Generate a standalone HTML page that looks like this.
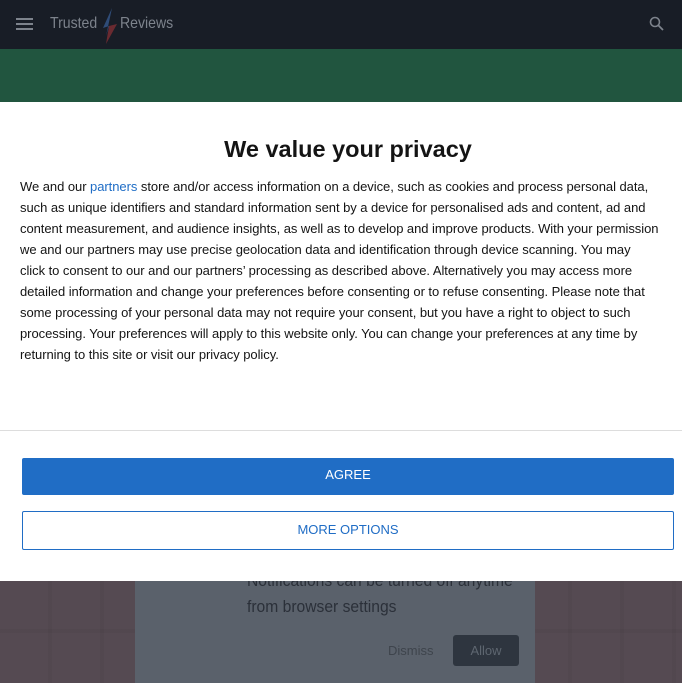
<!DOCTYPE html>
<html><head><style>
*{margin:0;padding:0;box-sizing:border-box}
body{width:682px;height:683px;overflow:hidden;position:relative;font-family:"Liberation Sans",sans-serif;background:#54494f}
.hdr{position:absolute;left:0;top:0;width:682px;height:49px;background:#181d26}
.green{position:absolute;left:0;top:49px;width:682px;height:53px;background:#21553f}
.bot{position:absolute;left:0;top:581px;width:682px;height:102px;background:
repeating-linear-gradient(90deg,transparent 0 48px,rgba(0,0,0,.035) 48px 52px),
repeating-linear-gradient(0deg,transparent 0 50px,rgba(0,0,0,.035) 50px 54px),#554a52}
.panel{position:absolute;left:135px;top:560px;width:400px;height:123px;background:#5a616b}
.modal{position:absolute;left:0;top:102px;width:682px;height:479px;background:#fff}
h1{position:absolute;top:34px;left:7px;width:100%;text-align:center;font-size:23.5px;font-weight:bold;color:#141414}
.txt{position:absolute;left:20px;top:74px;width:660px;font-size:13px;line-height:21px;color:#141414;letter-spacing:-0.05px;white-space:nowrap}
.txt a{color:#1f6dc6;text-decoration:none}
.sep{position:absolute;left:0;top:328px;width:682px;height:1px;background:#ddd}
.b1{position:absolute;left:22px;top:356px;width:652px;height:37px;background:#206dc5;border-radius:2px;color:#fff;font-size:13px;text-align:center;line-height:34px}
.b2{position:absolute;left:22px;top:409px;width:652px;height:39px;border:1px solid #206dc5;border-radius:2px;color:#206dc5;font-size:13px;text-align:center;line-height:36px}
.n{display:inline-block;transform:scaleX(.88);transform-origin:left}
</style></head><body>
<div class="hdr">
<svg style="position:absolute;left:16px;top:17px" width="17" height="14"><g stroke="#7d838c" stroke-width="2"><line x1="0" y1="2" x2="17" y2="2"/><line x1="0" y1="7" x2="17" y2="7"/><line x1="0" y1="12" x2="17" y2="12"/></g></svg>
<span class="n" style="position:absolute;left:50px;top:15px;font-size:16px;color:#7d838c">Trusted</span>
<svg style="position:absolute;left:101px;top:8px" width="18" height="36"><polygon points="11,0 2,20 8,18 5,28" fill="#2f4c78"/><polygon points="8,18 16,16 5,36" fill="#6a2a30"/></svg>
<span class="n" style="position:absolute;left:120px;top:15px;font-size:16px;color:#7d838c">Reviews</span>
<svg style="position:absolute;left:649px;top:16px" width="15" height="15"><circle cx="6" cy="6" r="4.5" stroke="#7d838c" stroke-width="1.6" fill="none"/><line x1="9.5" y1="9.5" x2="14" y2="14" stroke="#7d838c" stroke-width="1.8"/></svg>
</div>
<div style="position:absolute;left:545px;top:49px;width:137px;height:1px;background:#181d26"></div>
<div class="green"></div>
<div class="bot"></div>
<div class="panel">
<div style="position:absolute;left:112px;top:8px;font-size:17px;color:#2b3039;line-height:26px;white-space:nowrap;display:inline-block;transform:scaleX(.92);transform-origin:left">Notifications can be turned off anytime<br>from browser settings</div>
<span style="position:absolute;left:253px;top:83px;font-size:13px;color:#3e444c">Dismiss</span>
<div style="position:absolute;left:318px;top:75px;width:66px;height:31px;background:#2e353f;border-radius:3px;color:#5e6670;font-size:13px;text-align:center;line-height:31px">Allow</div>
</div>
<div class="modal">
<h1>We value your privacy</h1>
<div class="txt">We and our <a>partners</a> store and/or access information on a device, such as cookies and process personal data,<br>such as unique identifiers and standard information sent by a device for personalised ads and content, ad and<br>content measurement, and audience insights, as well as to develop and improve products. With your permission<br>we and our partners may use precise geolocation data and identification through device scanning. You may<br>click to consent to our and our partners’ processing as described above. Alternatively you may access more<br>detailed information and change your preferences before consenting or to refuse consenting. Please note that<br>some processing of your personal data may not require your consent, but you have a right to object to such<br>processing. Your preferences will apply to this website only. You can change your preferences at any time by<br>returning to this site or visit our privacy policy.</div>
<div class="sep"></div>
<div class="b1">AGREE</div>
<div class="b2">MORE OPTIONS</div>
</div>
</body></html>
